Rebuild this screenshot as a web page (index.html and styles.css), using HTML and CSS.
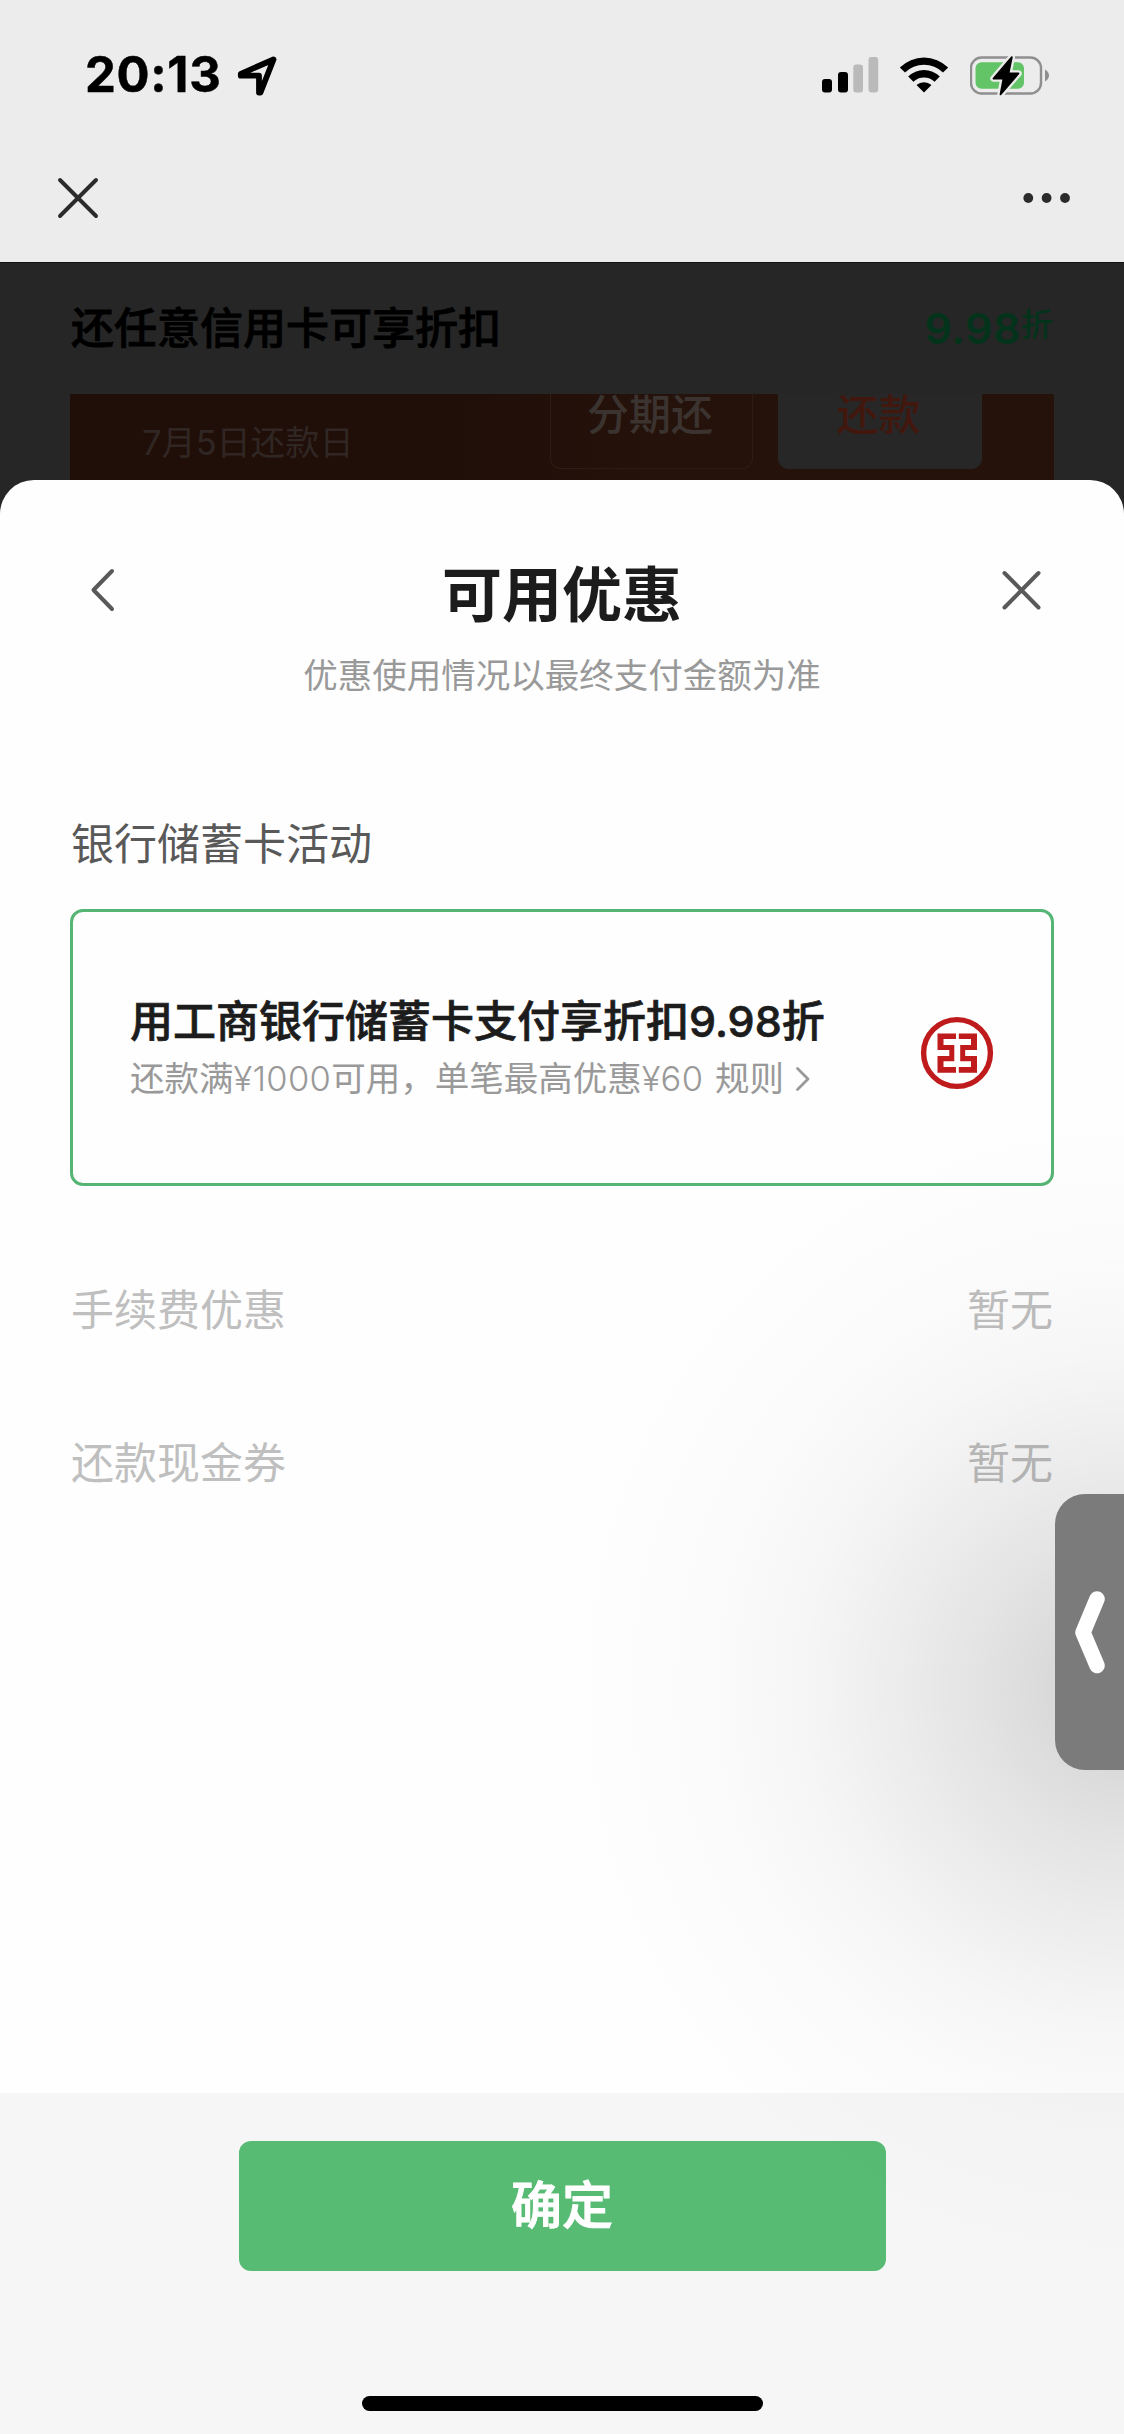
FILE: index.html
```html
<!DOCTYPE html>
<html lang="zh-CN">
<head>
<meta charset="utf-8">
<title>可用优惠</title>
<link rel="stylesheet" href="styles.css">
</head>
<body>
<div class="screen">
  <header class="topbar">
    <div class="status">
      <div class="status-left">
        <span class="clock">20:13</span>
        <svg class="location" width="42" height="42" viewBox="0 0 42 42"><path d="M37.500 5.500 L4.800 19.800 V21.700 H23 V38.500 H24.500 Z" fill="none" stroke="#000" stroke-width="5.800" stroke-linejoin="round"/></svg>
      </div>
      <div class="status-right">
        <svg class="signal" width="57" height="36" viewBox="0 0 57 36"><rect x="0" y="22" width="10" height="13.500" rx="3"/><rect x="16" y="15" width="10" height="20.500" rx="3"/><rect x="31.300" y="7.500" width="9.700" height="28" rx="3" fill="#bababa"/><rect x="46.500" y="0" width="9.700" height="35.500" rx="3" fill="#bababa"/></svg>
        <svg class="wifi" width="50" height="36" viewBox="0 0 50 36"><path d="M.8 10.500 A34.500 34.500 0 0 1 49.200 10.500 L44 15.600 A27 27 0 0 0 6 15.600 Z M9.200 19.600 A22.500 22.500 0 0 1 40.800 19.600 L35.600 24.800 A15 15 0 0 0 14.400 24.800 Z M17.500 28 A11.500 11.500 0 0 1 32.500 28 L25 35.500 Z"/></svg>
        <svg class="battery" width="80" height="42" viewBox="0 0 80 42"><rect x="1" y="3.500" width="70" height="36" rx="10.500" fill="none" stroke="#8f8f8f" stroke-width="2.400"/><path d="M75 15.500 Q79 18 79 21.500 Q79 25 75 27.500 Z" fill="#8f8f8f"/><rect x="5.500" y="8.300" width="48.500" height="26.500" rx="6" fill="#62c466"/><path d="M41.800 3.200 L23.500 24.500 H33.500 L30.500 40.300 L48.500 19.500 H38.500 Z" fill="#000" stroke="#ececec" stroke-width="6.500" stroke-linejoin="round"/><path d="M41.800 3.200 L23.500 24.500 H33.500 L30.500 40.300 L48.500 19.500 H38.500 Z" fill="#000" stroke="#000" stroke-width="1.800" stroke-linejoin="round"/></svg>
      </div>
    </div>
    <nav class="nav">
      <svg width="42" height="42" viewBox="0 0 42 42"><path d="M3 3 L39 39 M39 3 L3 39" stroke="#2b2b2b" stroke-width="3.900" stroke-linecap="round"/></svg>
      <svg width="48" height="12" viewBox="0 0 48 12" fill="#2b2b2b"><circle cx="5.300" cy="6" r="4.900"/><circle cx="23.600" cy="6" r="4.900"/><circle cx="42" cy="6" r="4.900"/></svg>
    </nav>
  </header>

  <section class="dimmed">
    <div class="promo">
      <span class="promo-title">还任意信用卡可享折扣</span>
      <span class="rate">9.98<small>折</small></span>
    </div>
    <div class="bill">
      <span class="due">7月5日还款日</span>
      <span class="bill-button outline">分期还</span>
      <span class="bill-button solid">还款</span>
    </div>
  </section>

  <main class="sheet">
    <div class="sheet-head">
      <svg width="26" height="46" viewBox="0 0 26 46"><path d="M22 4 L3.500 23 L22 42" fill="none" stroke="#595959" stroke-width="4" stroke-linecap="round" stroke-linejoin="round"/></svg>
      <h1>可用优惠</h1>
      <svg width="42" height="42" viewBox="0 0 42 42"><path d="M4.500 4 L38.500 38.500 M38.500 4 L4.500 38.500" stroke="#595959" stroke-width="4" stroke-linecap="round"/></svg>
    </div>
    <p class="note">优惠使用情况以最终支付金额为准</p>
    <h2>银行储蓄卡活动</h2>
    <article class="offer">
      <div class="offer-text">
        <strong>用工商银行储蓄卡支付享折扣<span class="num">9.98</span>折</strong>
        <p>还款满<span class="num">¥1000</span>可用，单笔最高优惠<span class="num">¥60</span> <span class="rule">规则<svg width="16" height="26" viewBox="0 0 16 26"><path d="M2.500 2.500 L13 13 L2.500 23.500" fill="none" stroke="#999" stroke-width="2.800" stroke-linecap="round" stroke-linejoin="round"/></svg></span></p>
      </div>
      <svg class="bank" width="74" height="74" viewBox="0 0 74 74"><circle cx="37" cy="37" r="33.400" fill="#fff" stroke="#bf1b1c" stroke-width="5.400"/><path d="M17.500 17.500H36V23H23.500V29H34.300V45.300H23.500V51H36V56.700H17.500V40H29.300V34H17.500Z M57 17.500H38.800V23H51V29H40.200V45.300H51V51H38.800V56.700H57V40H45.200V34H57Z" fill="#bf1b1c"/></svg>
    </article>
    <ul class="options">
      <li><span>手续费优惠</span><span>暂无</span></li>
      <li><span>还款现金券</span><span>暂无</span></li>
    </ul>
    <footer class="actions">
      <button class="confirm">确定</button>
      <i class="home"></i>
    </footer>
  </main>

  <div class="glow"></div>
  <div class="side-tab"><svg width="34" height="84" viewBox="0 0 34 84"><path d="M24 9 L10 42.500 L24 75.500" fill="none" stroke="#fff" stroke-width="15.500" stroke-linecap="round" stroke-linejoin="round"/></svg></div>
</div>
</body>
</html>
```
FILE: styles.css
```css
* { box-sizing: border-box; }
body, h1, h2, p, ul { margin: 0; padding: 0; }
body {
  font-family: Inter, "Noto Sans CJK SC", sans-serif;
  background: #262626;
}
svg { display: block; flex: none; }

.screen {
  position: relative;
  display: flex;
  flex-direction: column;
  width: 1124px;
  height: 2434px;
  overflow: hidden;
}

/* Status bar and navigation */
.topbar { height: 262px; background: #ececec; flex: none; }
.status {
  display: flex;
  justify-content: space-between;
  align-items: center;
  height: 150px;
  padding: 0 74px 0 85px;
}
.status-left, .status-right { display: flex; align-items: center; }
.clock {
  font-size: 49px;
  font-weight: 700;
  line-height: 60px;
  letter-spacing: .7px;
  -webkit-text-stroke: .5px #000;
}
.location { margin-left: 14px; }
.wifi { margin-left: 20px; }
.battery { margin-left: 21px; }
.nav {
  display: flex;
  justify-content: space-between;
  align-items: center;
  height: 95px;
  padding: 0 53px 0 57px;
}

/* Page content behind the sheet */
.dimmed {
  height: 218px;
  padding: 0 70px;
  border-top: 1px solid #111;
  flex: none;
}
.promo {
  display: flex;
  justify-content: space-between;
  height: 131px;
  line-height: 131px;
  font-size: 43px;
  font-weight: 500;
  color: #000;
}
.promo-title { margin-left: 1px; -webkit-text-stroke: .8px #000; }
.rate { display: flex; font-weight: 600; color: #04331c; letter-spacing: .5px; margin-right: 1px; }
.rate small { font-size: 32px; font-weight: 500; line-height: 124px; letter-spacing: 0; }
.bill {
  display: flex;
  align-items: flex-start;
  height: 86px;
  padding: 0 72px 0 72px;
  background: linear-gradient(90deg, #200e08 40%, #25120b 60%);
}
.due { flex: 1; font-size: 34.300px; line-height: 98px; color: #302724; }
.bill-button {
  height: 75px;
  width: 204px;
  padding-right: 3px;
  font-size: 42px;
  font-weight: 500;
  line-height: 41px;
  text-align: center;
  border-radius: 0 0 11px 11px;
}
.outline { width: 203px; border: 1px solid #2e1d15; border-top: 0; color: #3b332f; margin-right: 25px; }
.solid { background: #272728; color: #42170e; }

/* Discount sheet */
.sheet {
  flex: 1;
  display: flex;
  flex-direction: column;
  background: #fefefe;
  border-radius: 34px 34px 0 0;
  overflow: hidden;
}
.sheet-head {
  display: flex;
  justify-content: space-between;
  align-items: center;
  height: 80px;
  margin-top: 70px;
  padding: 0 82px 0 90px;
}
.sheet-head h1 {
  padding: 9px 0 0 8px;
  font-size: 60px;
  font-weight: 700;
  line-height: 80px;
  color: #1c1c1c;
}
.note {
  margin-top: 26px;
  text-align: center;
  font-size: 34.500px;
  line-height: 40px;
  color: #999;
}
h2 {
  margin: 123px 0 0 71px;
  font-size: 43px;
  font-weight: 400;
  line-height: 50px;
  color: #595959;
}
.offer {
  display: flex;
  justify-content: space-between;
  align-items: center;
  margin: 40px 70px 0;
  height: 277px;
  padding: 12px 57px 0;
  border: 3px solid #55b574;
  border-radius: 13px;
}
.offer-text { margin-top: -7px; white-space: nowrap; }
.offer strong {
  display: block;
  font-size: 43px;
  font-weight: 500;
  line-height: 58px;
  color: #1c1c1c;
  -webkit-text-stroke: .7px #1c1c1c;
}
.offer p { font-size: 34.500px; line-height: 58px; color: #999; }
.offer p .num { font-weight: 300; letter-spacing: .3px; }
.rule { display: inline-flex; align-items: center; gap: 11px; margin-left: 2px; }
.bank { margin-top: -2px; }
.options { margin-top: 48px; list-style: none; }
.options li {
  display: flex;
  justify-content: space-between;
  padding: 0 71px;
  font-size: 43px;
  line-height: 153px;
  color: #bfbfbf;
}

/* Bottom action area */
.actions {
  display: flex;
  flex-direction: column;
  align-items: center;
  margin-top: auto;
  height: 341px;
  padding-top: 48px;
  background: #f6f6f7;
}
.confirm {
  width: 647px;
  height: 130px;
  border: 0;
  border-radius: 12px;
  background: #57bb73;
  color: #fff;
  font: 500 51px/126px Inter, "Noto Sans CJK SC", sans-serif;
  -webkit-text-stroke: 1px #fff;
}
.home { width: 401px; height: 15px; margin-top: 125px; border-radius: 8px; background: #000; }

/* Floating edge tab with its soft shade */
.glow {
  position: absolute;
  right: 0;
  top: 1100px;
  width: 580px;
  height: 1180px;
  background: radial-gradient(ellipse 560px 580px at 100% 50%, rgba(0,0,0,.16), rgba(0,0,0,.14) 14%, rgba(0,0,0,.105) 26%, rgba(0,0,0,.065) 42%, rgba(0,0,0,.033) 58%, rgba(0,0,0,.012) 76%, transparent);
}
.side-tab {
  position: absolute;
  right: 0;
  top: 1494px;
  display: flex;
  align-items: center;
  width: 69px;
  height: 276px;
  padding-left: 18px;
  border-radius: 30px 0 0 30px;
  background: #7b7b7b;
}
```
